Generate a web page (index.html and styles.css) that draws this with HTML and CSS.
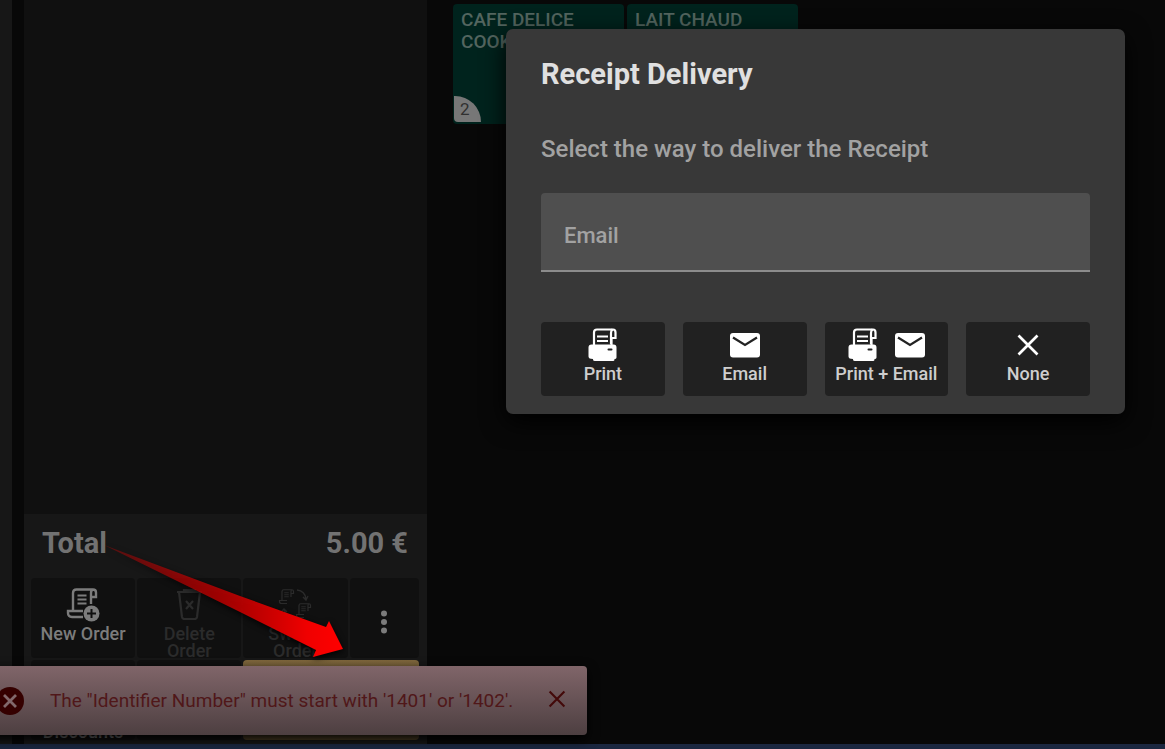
FILE: index.html
```html
<!DOCTYPE html>
<html lang="en">
<head>
<meta charset="utf-8">
<title>Point of Sale</title>
<link rel="stylesheet" href="styles.css">
</head>
<body>
<svg class="defs" aria-hidden="true">
  <defs>
    <symbol id="printer" viewBox="0 0 36 36">
      <path d="M9 18V5.500q0-3 3-3h16q2.500 0 2.500 3V11h-4v7" fill="none" stroke="currentColor" stroke-width="2.200"/>
      <path d="M26 17V6q0-2.500 1.500-3.500" fill="none" stroke="currentColor" stroke-width="2.200"/>
      <path d="M12 9.500h11M12 14h11" stroke="currentColor" stroke-width="1.800"/>
      <path fill-rule="evenodd" fill="currentColor" d="M6.500 17.500h22q3 0 3 3v10q0 1.500-2 1.500v.5q0 1.500-1.500 1.500h-18Q8 34 8 32.500V32q-4.500 0-4.500-2.500V20.500q0-3 3-3zM23.500 21.500q-1 0-1 1t1 1h3q1 0 1-1t-1-1z"/>
    </symbol>
    <symbol id="mail" viewBox="0 0 36 36">
      <rect x="3" y="6" width="30" height="24.500" rx="3" fill="currentColor"/>
      <path d="M6 10.500L18 18l12-7.500" fill="none" stroke="#222" stroke-width="2.200"/>
    </symbol>
    <symbol id="cross" viewBox="0 0 36 36">
      <path d="M8.500 8.500l19 19M27.500 8.500l-19 19" fill="none" stroke="currentColor" stroke-width="2.700"/>
    </symbol>
    <symbol id="scroll" viewBox="0 0 36 36">
      <path d="M8 25V7q0-3.500 3.500-3.500H28q3 0 3 3V11h-5M26 18V7q0-3 2-3.500M18 31H7q-4 0-4-4v-2h15" fill="none" stroke="currentColor" stroke-width="2.400"/>
      <path d="M12.500 9.500h9M12.500 13.500h9M12.500 17.500h9" stroke="currentColor" stroke-width="1.800"/>
    </symbol>
  </defs>
</svg>

<div class="app">
  <main class="workspace">
    <div class="rail"></div>
    <section class="order">
      <div class="order-lines"></div>
      <div class="total"><span>Total</span><span>5.00 €</span></div>
      <div class="keypad">
        <button class="key">
          <svg class="icon" viewBox="0 0 36 36" aria-hidden="true">
            <use href="#scroll"/>
            <circle cx="26.500" cy="27.500" r="8" fill="currentColor"/>
            <path d="M26.500 23v9M22 27.500h9" stroke="#101010" stroke-width="2"/>
          </svg>
          <span>New Order</span>
        </button>
        <button class="key" disabled>
          <svg class="icon" viewBox="0 0 36 36" aria-hidden="true">
            <path d="M6 6h25M8 6l3 25q.5 2 2.500 2h10q2 0 2.500-2L29 6M13 5.500V4h11v1.500M15 15l7 8M22 15l-7 8" fill="none" stroke="currentColor" stroke-width="2.200"/>
          </svg>
          <span>Delete Order</span>
        </button>
        <button class="key" disabled>
          <svg class="icon" viewBox="0 0 36 36" aria-hidden="true">
            <use href="#scroll" width="18" height="18" x="1" y="2"/>
            <use href="#scroll" width="18" height="18" x="18" y="16"/>
            <path d="M20 4q8 1 9 9M26 11l3 3 2-4M7 23q1 8 9 9M4 26l3-3 3 3" fill="none" stroke="currentColor" stroke-width="1.400"/>
          </svg>
          <span>Switch Order</span>
        </button>
        <button class="key key-more" aria-label="More">
          <svg class="icon" viewBox="0 0 36 36" aria-hidden="true">
            <g fill="currentColor"><circle cx="18" cy="9.500" r="3"/><circle cx="18" cy="18" r="3"/><circle cx="18" cy="26.500" r="3"/></g>
          </svg>
        </button>
        <button class="key key-low"><span>Discounts</span></button>
        <button class="key" aria-label="Key"></button>
        <button class="key key-pay" aria-label="Pay"></button>
      </div>
    </section>
    <section class="catalog">
      <button class="product"><span>CAFE DELICE COOKIE</span><span class="count">2</span></button>
      <button class="product"><span>LAIT CHAUD</span></button>
    </section>
  </main>
  <footer class="taskbar"></footer>

  <div class="dialog" role="dialog" aria-labelledby="dialog-title">
    <h1 class="dialog-title" id="dialog-title">Receipt Delivery</h1>
    <p class="dialog-text">Select the way to deliver the Receipt</p>
    <input class="field" type="email" placeholder="Email" aria-label="Email">
    <div class="actions">
      <button class="action"><span class="icons"><svg class="icon"><use href="#printer"/></svg></span><span>Print</span></button>
      <button class="action"><span class="icons"><svg class="icon"><use href="#mail"/></svg></span><span>Email</span></button>
      <button class="action"><span class="icons"><svg class="icon"><use href="#printer"/></svg><svg class="icon"><use href="#mail"/></svg></span><span>Print + Email</span></button>
      <button class="action"><span class="icons"><svg class="icon"><use href="#cross"/></svg></span><span>None</span></button>
    </div>
  </div>

  <div class="toast" role="alert">
    <svg class="toast-icon" viewBox="0 0 28 28" aria-hidden="true">
      <circle cx="14" cy="14" r="14" fill="#350000"/>
      <path d="M8 8l12 12M20 8L8 20" stroke="#82686b" stroke-width="2.800"/>
    </svg>
    <span class="toast-text">The "Identifier Number" must start with '1401' or '1402'.</span>
    <button class="toast-close" aria-label="Close"><svg class="toast-cross"><use href="#cross"/></svg></button>
  </div>

  <svg class="arrow" viewBox="0 0 250 120" aria-hidden="true">
    <defs>
      <linearGradient id="fade" x1="0" y1="0" x2="1" y2="0">
        <stop offset="0" stop-color="#f00" stop-opacity=".25"/>
        <stop offset=".5" stop-color="#d40000" stop-opacity=".75"/>
        <stop offset=".85" stop-color="#f00000"/>
        <stop offset="1" stop-color="#f00"/>
      </linearGradient>
    </defs>
    <path d="M4 5L140 56L226 87L229 81L243 109L213 117L216 110L140 72Z" fill="url(#fade)"/>
  </svg>
</div>
</body>
</html>
```
FILE: styles.css
```css
* { box-sizing: border-box; }

body {
  margin: 0;
  background: #080808;
  font-family: Roboto, "Liberation Sans", sans-serif;
  font-weight: 500;
}

button {
  margin: 0;
  padding: 0;
  border: 0;
  font: inherit;
  color: inherit;
}

.defs { position: absolute; width: 0; height: 0; }

.app {
  position: relative;
  display: flex;
  flex-direction: column;
  min-height: 100vh;
  overflow: hidden;
}

.workspace { display: flex; flex: 1; }

.rail {
  width: 12px;
  margin-right: 12px;
  background: #171717;
}

.order {
  display: flex;
  flex-direction: column;
  width: 403px;
  background: #171717;
}

.order-lines { flex: 1; background: #101010; }

.total {
  display: flex;
  justify-content: space-between;
  padding: 11px 19px 17px 18px;
  font-size: 29px;
  font-weight: 700;
  line-height: 36px;
  color: #727272;
}

.keypad {
  display: grid;
  grid-template-columns: 3fr 3fr 3fr 2fr;
  grid-auto-rows: 80px;
  gap: 2px;
  padding: 0 8px 4px 7px;
}

.key {
  display: flex;
  flex-direction: column;
  align-items: center;
  padding: 8px 16px 0;
  border-radius: 4px;
  background: #101010;
  color: #7c7c7c;
  font-size: 18px;
  line-height: 17px;
}

.key:first-child { padding: 8px 0 0; }
.key:disabled { color: #2b2b2b; }
.key-more { justify-content: center; padding: 8px 0 0; }
.key-low { justify-content: flex-end; padding: 0; }
.key-pay { grid-column: span 2; background: linear-gradient(#80683d, #4c3e25); }

.icon { width: 36px; height: 36px; flex: none; }
.key .icon { margin-bottom: 3px; }
.key-more .icon { margin-bottom: 0; }

.catalog {
  display: flex;
  flex: 1;
  align-items: flex-start;
  gap: 3px;
  padding: 4px 26px;
}

.product {
  position: relative;
  width: 171px;
  height: 120px;
  padding: 5px 8px;
  border-radius: 4px;
  background: #00231d;
  color: #53655f;
  font-size: 19px;
  line-height: 22px;
  text-align: left;
  display: flex;
}

.count {
  position: absolute;
  left: 1px;
  bottom: 2px;
  width: 27px;
  height: 26px;
  padding-left: 6px;
  border-radius: 0 26px 0 4px;
  background: #777;
  color: #303030;
  font-size: 17px;
  font-weight: 400;
  line-height: 27px;
}

.taskbar { height: 5px; background: #1b2740; }

.dialog {
  position: absolute;
  top: 29px;
  left: 506px;
  right: 40px;
  padding: 27px 35px 18px;
  border-radius: 7px;
  background: #383838;
  box-shadow: 0 8px 24px #000;
}

.dialog-title {
  margin: 0 0 43px;
  font-size: 29px;
  font-weight: 700;
  line-height: 36px;
  color: #e0e0e0;
}

.dialog-text {
  margin: 0 0 30px;
  font-size: 24px;
  line-height: 28px;
  color: #a2a2a2;
}

.field {
  display: block;
  width: 100%;
  height: 79px;
  padding: 8px 23px 0;
  border: 0;
  border-bottom: 2px solid #8c8c8c;
  border-radius: 4px 4px 0 0;
  background: #4f4f4f;
  color: #e6e6e6;
  font: inherit;
  font-size: 22px;
}

.field::placeholder { color: #a2a2a2; opacity: 1; }

.actions {
  display: grid;
  grid-template-columns: repeat(4, 1fr);
  gap: 18px;
  margin-top: 50px;
}

.action {
  display: flex;
  flex-direction: column;
  align-items: center;
  padding: 5px 0 11px;
  border-radius: 4px;
  background: #212121;
  color: #cecece;
  font-size: 18px;
  line-height: 22px;
}

.icons { display: flex; gap: 11px; color: #fff; }

.toast {
  position: absolute;
  left: -18px;
  bottom: 14px;
  display: flex;
  align-items: center;
  width: 605px;
  height: 69px;
  padding: 0 16px 0 14px;
  border-radius: 4px;
  background: linear-gradient(#806569, #4d3f41);
  box-shadow: 0 4px 12px #000;
  color: #501719;
  font-size: 19px;
  font-weight: 400;
}

.toast-icon { width: 28px; height: 28px; }
.toast-text { flex: 1; margin-left: 26px; }

.toast-close {
  width: 28px;
  height: 32px;
  background: none;
  color: #430909;
}

.toast-cross { width: 28px; height: 28px; }

.arrow {
  position: absolute;
  left: 100px;
  bottom: 89px;
  width: 250px;
  height: 120px;
  filter: drop-shadow(0 2px 3px #000);
}
```
